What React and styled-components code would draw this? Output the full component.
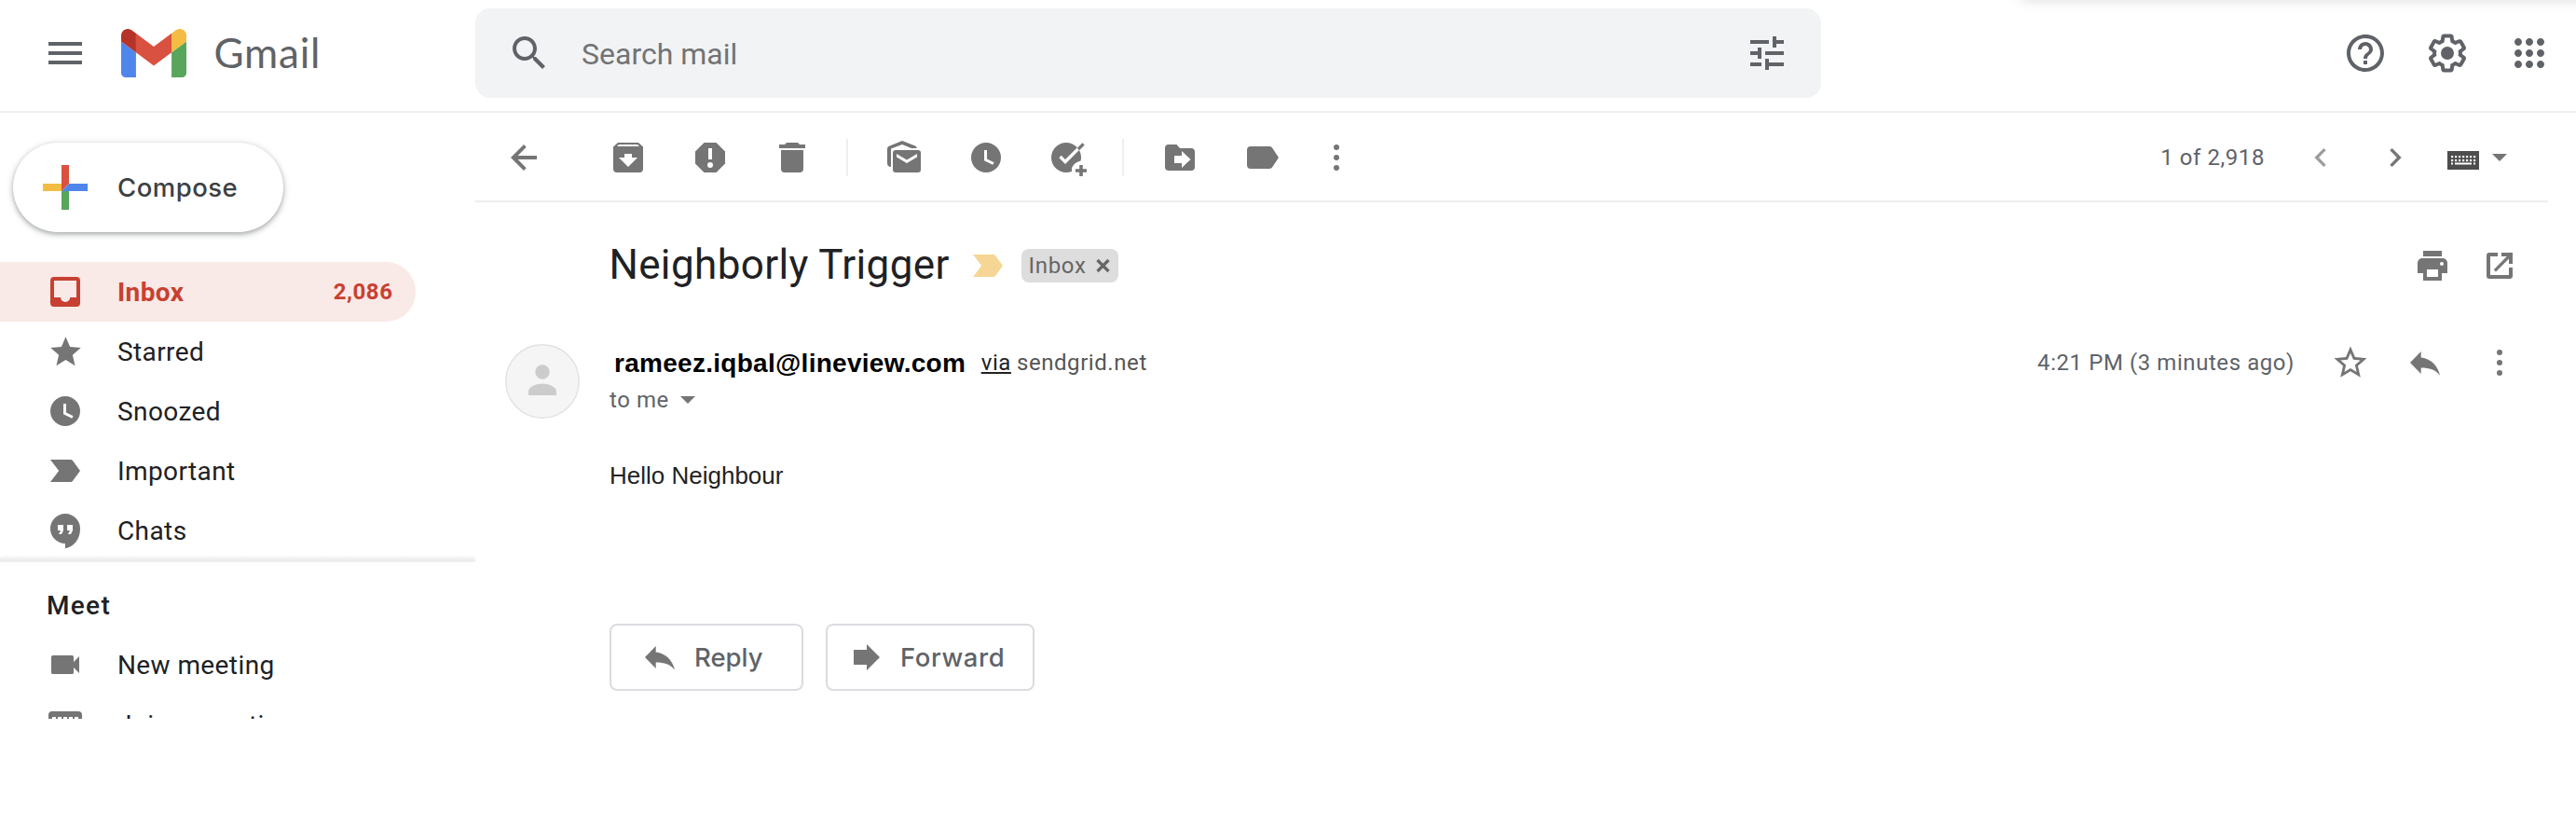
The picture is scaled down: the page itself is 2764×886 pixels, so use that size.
import React from "react";
import styled, { createGlobalStyle, css } from "styled-components";

const GlobalStyle = createGlobalStyle`
  * { box-sizing: border-box; }
  body { margin: 0; background: #fff; font-family: Roboto, "Liberation Sans", sans-serif; }
`;

const buttonFont = css`
  font-family: Inter, Roboto, sans-serif;
  font-size: 27.5px;
  font-weight: 500;
`;

/* ---------- page frame ---------- */

const Page = styled.div`
  width: 2764px;
  height: 886px;
  overflow: hidden;
  background: #fff;
  color: #202124;
`;

const Header = styled.header`
  position: relative;
  overflow: hidden;
  display: flex;
  align-items: center;
  height: 121px;
  padding: 0 26px 5px 0;
  border-bottom: 2px solid #eee;
`;

const FloatingShade = styled.div`
  position: absolute;
  top: -14px;
  right: -20px;
  width: 616px;
  height: 12px;
  border-radius: 8px;
  box-shadow: 0 0 16px rgba(0, 0, 0, 0.2);
`;

const Brand = styled.div`
  display: flex;
  align-items: center;
  width: 510px;
  padding-left: 46px;
`;

const Logo = styled.svg`
  width: 70px;
  height: 52px;
  margin-left: 36px;
`;

const Wordmark = styled.span`
  font-family: Lato, Roboto, sans-serif;
  margin-left: 29.5px;
  padding-bottom: 2px;
  font-size: 44px;
  line-height: 52px;
  letter-spacing: 0.8px;
  color: #5f6368;
`;

const SearchBar = styled.div`
  display: flex;
  align-items: center;
  width: 1444px;
  height: 96px;
  padding: 0 34px;
  border-radius: 16px;
  background: #f1f3f4;
`;

const SearchText = styled.span`
  flex: 1;
  margin-left: 32px;
  padding-top: 2px;
  font-size: 32px;
  color: #727375;
`;

const HeaderActions = styled.div`
  display: flex;
  gap: 40px;
  margin-left: auto;
`;

const Columns = styled.div`
  display: flex;
`;

/* ---------- sidebar ---------- */

const Sidebar = styled.aside`
  width: 510px;
  height: 650px;
  overflow: hidden;
`;

const ComposeButton = styled.div`
  ${buttonFont}
  display: flex;
  align-items: center;
  gap: 32px;
  width: 290px;
  height: 96px;
  margin: 32px 0 32px 14px;
  padding-left: 32px;
  border-radius: 48px;
  background: #fff;
  color: #3c4043;
  letter-spacing: 0.5px;
  box-shadow: 0 2px 4px rgba(60, 64, 67, 0.32), 0 2px 6px 2px rgba(60, 64, 67, 0.15);
`;

const NavList = styled.nav`
  position: relative;
  height: 322px;
  border-bottom: 3px solid #eee;
  &::after {
    content: "";
    position: absolute;
    left: 0;
    right: 0;
    bottom: 0;
    height: 4px;
    border-radius: 4px 4px 0 0;
    background: linear-gradient(rgba(238, 238, 238, 0.2), #eee);
  }
`;

const NavItem = styled.div`
  display: flex;
  align-items: center;
  width: 446px;
  height: 64px;
  padding-right: 24.5px;
  border-radius: 0 32px 32px 0;
  background: ${(p) => (p.$active ? "#f9e9e7" : "transparent")};
  color: ${(p) => (p.$active ? "#c84031" : "#202124")};
  font-size: 28px;
  font-weight: ${(p) => (p.$active ? 700 : 400)};
  letter-spacing: 0.4px;
`;

const NavIcon = styled.span`
  display: flex;
  justify-content: center;
  width: 48px;
  margin: 0 32px 0 46px;
  color: ${(p) => (p.$active ? "#c84031" : "#757575")};
`;

const NavCount = styled.span`
  margin-left: auto;
  font-size: 24px;
  letter-spacing: 0.57px;
`;

const SectionTitle = styled.div`
  height: 78px;
  padding: 15px 0 0 50px;
  font-size: 28px;
  line-height: 63px;
  font-weight: 500;
  letter-spacing: 1.3px;
`;

/* ---------- message pane ---------- */

const Main = styled.main`
  width: 2224px;
`;

const Toolbar = styled.div`
  display: flex;
  align-items: center;
  height: 96px;
  padding: 2px 44px 0 8px;
  border-bottom: 2px solid #eee;
  color: #757575;
`;

const Slot = styled.span`
  display: flex;
  align-items: center;
  justify-content: center;
  width: ${(p) => p.$w || 88}px;
  margin-right: ${(p) => p.$after || 0}px;
  color: ${(p) => (p.$muted ? "#9d9d9d" : "#757575")};
`;

const Divider = styled.span`
  width: 2px;
  height: 40px;
  margin: 0 16px 0 14px;
  background: #eee;
`;

const Meta = styled.span`
  margin-left: ${(p) => (p.$push ? "auto" : 0)};
  margin-right: ${(p) => p.$after || 0}px;
  color: ${(p) => p.$tone || "#5f6368"};
  font-size: 24px;
  letter-spacing: 0.57px;
  white-space: nowrap;
`;

const Keyboard = styled.svg`
  width: 34px;
  height: 20px;
  margin: 6px 14px 0 16px;
  color: #4d4d4d;
`;

const Caret = styled.svg`
  width: 16px;
  height: 8px;
  margin-left: ${(p) => p.$before || 0}px;
  color: #757575;
`;

const SubjectRow = styled.div`
  display: flex;
  align-items: center;
  height: 104px;
  margin-top: 16px;
  padding: 0 16px 0 143.4px;
`;

const Subject = styled.h1`
  width: 367px;
  margin: 0 23.6px 2px 0;
  font-size: 44px;
  line-height: 52px;
  font-weight: 400;
  letter-spacing: 0.38px;
  white-space: nowrap;
  color: #202124;
`;

const Chip = styled.span`
  display: flex;
  align-items: center;
  justify-content: space-between;
  width: 104px;
  height: 36px;
  margin-left: 20px;
  padding: 0 9px 0 7.5px;
  border-radius: 8px;
  background: #ddd;
  color: #666;
  font-size: 24px;
  letter-spacing: 0.7px;
`;

const RowActions = styled.div`
  display: flex;
  align-items: center;
  margin-left: auto;
`;

const SenderRow = styled.div`
  display: flex;
  height: 80px;
  margin-top: 32px;
  padding: 0 12px 0 32px;
`;

const Avatar = styled.svg`
  width: 80px;
  height: 80px;
  margin-right: 32px;
`;

const SenderLines = styled.div`
  display: grid;
  grid-template-rows: 40px 40px;
  flex: 1;
`;

const Line = styled.div`
  display: flex;
  align-items: center;
`;

const SenderName = styled.span`
  margin: 0 16.5px 0 5px;
  padding-top: 2px;
  font-family: "Liberation Sans", Arial, sans-serif;
  font-size: 28px;
  font-weight: 700;
  letter-spacing: 0.28px;
  color: #000;
`;

const Via = styled(Meta)`
  color: #222;
  text-decoration: underline;
  text-decoration-thickness: 2px;
  text-underline-offset: 2px;
`;

const Body = styled.div`
  margin-top: 41px;
  padding-left: 144px;
  height: 179px;
  font-family: "Liberation Sans", Arial, sans-serif;
  font-size: 26px;
  line-height: 40px;
  color: #222;
`;

const Replies = styled.div`
  display: flex;
  gap: 24px;
  padding-left: 144px;
`;

const OutlineButton = styled.div`
  ${buttonFont}
  display: flex;
  align-items: center;
  width: ${(p) => p.$w}px;
  height: 72px;
  padding-left: ${(p) => p.$pad}px;
  gap: ${(p) => p.$gap}px;
  border: 2px solid #dadce0;
  border-radius: 8px;
  letter-spacing: ${(p) => p.$track || 0}px;
  color: #5f6368;
  svg { color: #757575; }
`;

/* ---------- icons ---------- */

const Icon = ({ w, h = w, box = `0 0 ${w} ${h}`, children }) => (
  <svg width={w} height={h} viewBox={box} fill="currentColor" fillRule="evenodd" overflow="visible">
    {children}
  </svg>
);

const Glyph = ({ d, size = 48, color }) => (
  <svg width={size} height={size} viewBox="0 0 24 24" fill={color || "currentColor"}>
    <path d={d} />
  </svg>
);

const GRAY = "#5f6368";
const paths = {
  menu: "M3 18h18v-2H3v2zm0-5h18v-2H3v2zm0-7v2h18V6H3z",
  search:
    "M15.5 14h-.79l-.28-.27C15.41 12.59 16 11.11 16 9.5 16 5.91 13.09 3 9.5 3S3 5.91 3 9.5 5.91 16 9.5 16c1.61 0 3.09-.59 4.23-1.57l.27.28v.79l5 4.99L20.49 19l-4.99-5zm-6 0C7.01 14 5 11.99 5 9.5S7.01 5 9.5 5 14 7.01 14 9.5 11.99 14 9.5 14z",
  tune: "M3 17v2h6v-2H3zM3 5v2h10V5H3zm10 16v-2h8v-2h-8v-2h-2v6h2zM7 9v2H3v2h4v2h2V9H7zm14 4v-2H11v2h10zm-6-4h2V7h4V5h-4V3h-2v6z",
  help: "M11 18h2v-2h-2v2zm1-16C6.48 2 2 6.48 2 12s4.48 10 10 10 10-4.48 10-10S17.52 2 12 2zm0 18c-4.41 0-8-3.59-8-8s3.59-8 8-8 8 3.59 8 8-3.59 8-8 8zm0-14c-2.21 0-4 1.79-4 4h2c0-1.1.9-2 2-2s2 .9 2 2c0 2-3 1.75-3 5h2c0-2.25 3-2.5 3-5 0-2.21-1.79-4-4-4z",
  gear: "M13.85 22.25h-3.7c-.74 0-1.36-.54-1.45-1.27l-.27-1.89c-.27-.14-.53-.29-.79-.46l-1.8.72c-.7.26-1.47-.03-1.81-.65L2.2 15.53c-.35-.66-.2-1.44.36-1.88l1.53-1.19c-.01-.15-.02-.3-.02-.46 0-.15.01-.31.02-.46l-1.52-1.19c-.59-.45-.74-1.26-.37-1.88l1.85-3.19c.34-.62 1.11-.9 1.79-.63l1.81.73c.26-.17.52-.32.78-.46l.27-1.91c.09-.7.71-1.25 1.44-1.25h3.7c.74 0 1.36.54 1.45 1.27l.27 1.89c.27.14.53.29.79.46l1.8-.72c.71-.26 1.48.03 1.82.65l1.84 3.18c.36.66.2 1.44-.36 1.88l-1.52 1.19c.01.15.02.3.02.46s-.01.31-.02.46l1.52 1.19c.56.45.72 1.23.37 1.86l-1.86 3.22c-.34.62-1.11.9-1.8.63l-1.8-.72c-.26.17-.52.32-.78.46l-.27 1.91c-.1.68-.72 1.22-1.46 1.22zm-3.23-2h2.76l.37-2.55.53-.22c.44-.18.88-.44 1.34-.78l.45-.34 2.38.96 1.38-2.4-2.03-1.58.07-.56c.03-.26.06-.51.06-.78s-.03-.53-.06-.78l-.07-.56 2.03-1.58-1.39-2.4-2.39.96-.45-.35c-.42-.32-.87-.58-1.33-.77l-.52-.22-.37-2.55h-2.76l-.37 2.55-.53.21c-.44.19-.88.44-1.34.79l-.45.33-2.38-.95-1.39 2.39 2.03 1.58-.07.56a7 7 0 0 0-.06.79c0 .26.02.53.06.78l.07.56-2.03 1.58 1.38 2.4 2.39-.96.45.35c.43.33.86.58 1.33.77l.53.22.38 2.55zM15.5 12a3.5 3.5 0 1 1-7 0 3.5 3.5 0 0 1 7 0z",
  apps: "M6 8c1.1 0 2-.9 2-2s-.9-2-2-2-2 .9-2 2 .9 2 2 2zm6 12c1.1 0 2-.9 2-2s-.9-2-2-2-2 .9-2 2 .9 2 2 2zm-6 0c1.1 0 2-.9 2-2s-.9-2-2-2-2 .9-2 2 .9 2 2 2zm0-6c1.1 0 2-.9 2-2s-.9-2-2-2-2 .9-2 2 .9 2 2 2zm6 0c1.1 0 2-.9 2-2s-.9-2-2-2-2 .9-2 2 .9 2 2 2zm4-8c0 1.1.9 2 2 2s2-.9 2-2-.9-2-2-2-2 .9-2 2zm-4 2c1.1 0 2-.9 2-2s-.9-2-2-2-2 .9-2 2 .9 2 2 2zm6 6c1.1 0 2-.9 2-2s-.9-2-2-2-2 .9-2 2 .9 2 2 2zm0 6c1.1 0 2-.9 2-2s-.9-2-2-2-2 .9-2 2 .9 2 2 2z",
  star: "M12 17.27 18.18 21l-1.64-7.03L22 9.24l-7.19-.61L12 2 9.19 8.63 2 9.24l5.46 4.73L5.82 21z",
  starOutline:
    "M22 9.24l-7.19-.62L12 2 9.19 8.63 2 9.24l5.46 4.73L5.82 21 12 17.27 18.18 21l-1.63-7.03L22 9.24zM12 15.4l-3.76 2.27 1-4.28-3.32-2.88 4.38-.38L12 6.1l1.71 4.04 4.38.38-3.32 2.88 1 4.28L12 15.4z",
  left: "M15.41 7.41 14 6l-6 6 6 6 1.41-1.41L10.83 12z",
  right: "M10 6 8.59 7.41 13.17 12l-4.58 4.59L10 18l6-6z",
};

const GmailLogo = () => (
  <Logo viewBox="52 42 88 66" preserveAspectRatio="none">
    <path fill="#4f86ec" d="M58 108h14V74L52 59v43c0 3.32 2.69 6 6 6" />
    <path fill="#58a55c" d="M120 108h14c3.32 0 6-2.69 6-6V59l-20 15" />
    <path fill="#f2bd42" d="M120 48v26l20-15v-8c0-7.42-8.47-11.65-14.4-7.2" />
    <path fill="#d95140" d="M72 74V48l24 18 24-18v26L96 92" />
    <path fill="#b63329" d="M52 51v8l20 15V48l-5.6-4.2c-5.94-4.45-14.4-.22-14.4 7.2" />
  </Logo>
);

const ComposePlus = () => (
  <Icon w={48}>
    <path fill="#f2bd42" d="M0 20h20v8H0z" />
    <path fill="#58a55c" d="M20 28h8v20h-8z" />
    <path fill="#4f86ec" d="M28 20h20v8H20z" />
    <path fill="#d95140" d="M20 0h8v20l-8 8z" />
  </Icon>
);

const InboxIcon = () => (
  <Icon w={32}>
    <path d="M4 0h24a4 4 0 0 1 4 4v24a4 4 0 0 1-4 4H4a4 4 0 0 1-4-4V4a4 4 0 0 1 4-4zM4 4v18h7a5.1 5.1 0 0 0 10.2 0H28V4z" />
  </Icon>
);

const ClockIcon = () => (
  <Icon w={32}>
    <path d="M16 0a16 16 0 1 1 0 32 16 16 0 0 1 0-32zM14 8v11.3l9.2 4.5 1.4-2.5L17 17.6V8z" />
  </Icon>
);

const ImportantIcon = ({ color = "currentColor" }) => (
  <Icon w={32} h={24}>
    <path fill={color} d="M0 0h21.5c1 0 2 .5 2.6 1.3L32 12l-7.9 10.7c-.6.8-1.6 1.3-2.6 1.3H0l9.2-12z" />
  </Icon>
);

const ChatsIcon = () => (
  <Icon w={32} h={37}>
    <path d="M16 0a16 16 0 1 0 0 32v5.3C25.5 35.5 32 27.5 32 16A16 16 0 0 0 16 0zM8 12h6v6l-2 4H9l2-4H8zM18 12h6v6l-2 4h-3l2-4h-3z" />
  </Icon>
);

const CameraIcon = () => (
  <Icon w={30} h={20}>
    <path d="M1.5 0h21A1.5 1.5 0 0 1 24 1.5V7l6-6v18l-6-6v5.5a1.5 1.5 0 0 1-1.5 1.5h-21A1.5 1.5 0 0 1 0 18.5v-17A1.5 1.5 0 0 1 1.5 0z" />
  </Icon>
);

const KeypadIcon = () => (
  <Icon w={36} h={28}>
    <path d="M4 0h28a4 4 0 0 1 4 4v20a4 4 0 0 1-4 4H4a4 4 0 0 1-4-4V4a4 4 0 0 1 4-4zM4 6v4h4V6zM10 6v4h4V6zM16 6v4h4V6zM22 6v4h4V6zM28 6v4h4V6zM4 12v4h4v-4zM10 12v4h4v-4zM16 12v4h4v-4zM22 12v4h4v-4zM28 12v4h4v-4zM10 20v4h16v-4z" />
  </Icon>
);

const BackIcon = () => (
  <Icon w={28}>
    <path d="M28 12H7.7l9-9.2L14 0 0 14l14 14 2.7-2.8L7.7 16H28z" />
  </Icon>
);

const ArchiveIcon = () => (
  <Icon w={32}>
    <path d="M5 0h22l5 4.5V28a4 4 0 0 1-4 4H4a4 4 0 0 1-4-4V4.5zM6 2 4 4h24l-2-2zM12 12v4H6l10 10 10-10h-6v-4z" />
  </Icon>
);

const SpamIcon = () => (
  <Icon w={32}>
    <path d="M9.5 0h13L32 9.5v13L22.5 32h-13L0 22.5v-13zM14 6v12h4V6zM16 21a3 3 0 1 0 0 6 3 3 0 0 0 0-6z" />
  </Icon>
);

const TrashIcon = () => (
  <Icon w={28} h={32}>
    <path d="M0 2h6l2-2h12l2 2h6v4H0zM2 8h24v20a4 4 0 0 1-4 4H6a4 4 0 0 1-4-4z" />
  </Icon>
);

const UnreadIcon = () => (
  <Icon w={36}>
    <path d="M4 28C1.5 28 0 26.5 0 24V9c0-1.5.6-2.5 2-3.2L16 0l14 5.5c1 .5 1.6 1.2 1.8 2.5H26L16 4 4 8.500z" />
    <path d="M9 10h24a3 3 0 0 1 3 3v18a3 3 0 0 1-3 3H9a3 3 0 0 1-3-3V13a3 3 0 0 1 3-3zM10 14v3.500L21 24l11-6.500V14l-11 6.500z" />
  </Icon>
);

const TaskIcon = () => (
  <Icon w={36} h={32}>
    <circle cx="16" cy="16" r="16" />
    <path fill="#fff" d="M36 19.5h-4c-5.500 1-9 4.500-10 8V38h14z" />
    <path fill="none" stroke="#fff" strokeWidth="3.4" d="m9.500 15 5.500 5.500L30 5.500" />
    <path fill="none" stroke="currentColor" strokeWidth="3.2" d="M29 7l5.600-5.600" />
    <path d="M30.200 24h3.600v4.200H38v3.600h-4.200V36h-3.600v-4.200H26v-3.600h4.200z" />
  </Icon>
);

const MoveIcon = () => (
  <Icon w={32} h={28}>
    <path d="M4 0h8.500L16 4h12a4 4 0 0 1 4 4v16a4 4 0 0 1-4 4H4a4 4 0 0 1-4-4V4a4 4 0 0 1 4-4zM10 12v8h8v5l9.500-9L18 7v5z" />
  </Icon>
);

const LabelIcon = () => (
  <Icon w={36} h={24} box="-2 0 36 24">
    <path d="M4 0h20c1.300 0 2.500.600 3.200 1.700L34 12l-6.800 10.300c-.7 1.100-1.900 1.700-3.200 1.700H4a4 4 0 0 1-4-4V4a4 4 0 0 1 4-4z" />
  </Icon>
);

const DotsIcon = () => (
  <Icon w={6} h={28}>
    <circle cx="3" cy="3" r="3" />
    <circle cx="3" cy="14" r="3" />
    <circle cx="3" cy="25" r="3" />
  </Icon>
);

const TriangleIcon = ({ $before }) => (
  <Caret $before={$before} viewBox="0 0 16 8" fill="currentColor">
    <path d="M0 0h16L8 8z" />
  </Caret>
);

const KeyboardIcon = () => (
  <Keyboard viewBox="0 0 34 20" fill="currentColor">
    <path d="M0 0h34v20H0z" />
    {[5, 9].map((y) =>
      [4, 8, 12, 16, 20, 24, 28].map((x) => <rect key={`${x}-${y}`} x={x} y={y} width="2.2" height="2.2" fill="#fff" />)
    )}
    <path fill="#fff" d="M4 12.500h2v2H4zM8 12.500h18v2H8zM28 12.500h2v2h-2z" />
  </Keyboard>
);

const PrintIcon = () => (
  <Icon w={32}>
    <path d="M6 0h20v6H6zM5 8h22a5 5 0 0 1 5 5v11h-6v8H6v-8H0V13a5 5 0 0 1 5-5zM10 20v8h12v-8zM26 12a2 2 0 1 0 0 4 2 2 0 0 0 0-4z" />
  </Icon>
);

const PopOutIcon = () => (
  <Icon w={28}>
    <path d="M12 0v4H4v20h20v-8h4v9a3 3 0 0 1-3 3H3a3 3 0 0 1-3-3V3a3 3 0 0 1 3-3zM16 0h12v12h-4V6.500L10 20.500 7.800 18.200 21.800 4H16z" />
  </Icon>
);

const ReplyIcon = () => (
  <Icon w={32} h={24}>
    <path d="M11.700 0v6.500C23 8 29.500 15.500 32 25.500 27 19.500 21 17.500 11.700 17.500V24L0 12z" />
  </Icon>
);

const ForwardIcon = () => (
  <Icon w={28}>
    <path d="M0 6h14V0l14 14-14 14v-6H0z" />
  </Icon>
);

const CloseIcon = () => (
  <Icon w={15} h={14}>
    <path fill="none" stroke="currentColor" strokeWidth="3.2" d="M1.500 1l12 12M13.500 1l-12 12" />
  </Icon>
);

const Person = () => (
  <Avatar viewBox="0 0 80 80">
    <circle cx="40" cy="40" r="39.3" fill="#f5f5f5" stroke="#e2e2e2" strokeWidth="1.4" />
    <circle cx="40" cy="30" r="7.7" fill="#ccc" />
    <path fill="#ccc" d="M25 55v-4c0-5.500 9-8.500 15-8.500s15 3 15 8.500v4z" />
  </Avatar>
);

/* ---------- page ---------- */

const folders = [
  { label: "Inbox", icon: <InboxIcon />, count: "2,086", active: true },
  { label: "Starred", icon: <Glyph d={paths.star} size={39} /> },
  { label: "Snoozed", icon: <ClockIcon /> },
  { label: "Important", icon: <ImportantIcon /> },
  { label: "Chats", icon: <ChatsIcon /> },
];

const meetings = [
  { label: "New meeting", icon: <CameraIcon /> },
  { label: "Join a meeting", icon: <KeypadIcon /> },
];

const NavRow = ({ item }) => (
  <NavItem $active={item.active}>
    <NavIcon $active={item.active}>{item.icon}</NavIcon>
    {item.label}
    {item.count && <NavCount>{item.count}</NavCount>}
  </NavItem>
);

export default function App() {
  return (
    <Page>
      <GlobalStyle />
      <Header>
        <FloatingShade />
        <Brand>
          <Glyph d={paths.menu} color={GRAY} />
          <GmailLogo />
          <Wordmark>Gmail</Wordmark>
        </Brand>
        <SearchBar>
          <Glyph d={paths.search} color={GRAY} />
          <SearchText>Search mail</SearchText>
          <Glyph d={paths.tune} color={GRAY} />
        </SearchBar>
        <HeaderActions>
          <Glyph d={paths.help} color={GRAY} />
          <Glyph d={paths.gear} color={GRAY} />
          <Glyph d={paths.apps} color={GRAY} />
        </HeaderActions>
      </Header>
      <Columns>
        <Sidebar>
          <ComposeButton>
            <ComposePlus />
            Compose
          </ComposeButton>
          <NavList>
            {folders.map((f) => <NavRow key={f.label} item={f} />)}
          </NavList>
          <SectionTitle>Meet</SectionTitle>
          {meetings.map((m) => <NavRow key={m.label} item={m} />)}
        </Sidebar>
        <Main>
          <Toolbar>
            <Slot $after={24}><BackIcon /></Slot>
            <Slot><ArchiveIcon /></Slot>
            <Slot><SpamIcon /></Slot>
            <Slot><TrashIcon /></Slot>
            <Divider />
            <Slot><UnreadIcon /></Slot>
            <Slot><ClockIcon /></Slot>
            <Slot><TaskIcon /></Slot>
            <Divider />
            <Slot><MoveIcon /></Slot>
            <Slot><LabelIcon /></Slot>
            <Slot $w={72}><DotsIcon /></Slot>
            <Meta $push $after={20}>1 of 2,918</Meta>
            <Slot $w={80} $muted><Glyph d={paths.left} size={40} /></Slot>
            <Slot $w={80}><Glyph d={paths.right} size={40} /></Slot>
            <KeyboardIcon />
            <TriangleIcon />
          </Toolbar>
          <SubjectRow>
            <Subject>Neighborly Trigger</Subject>
            <ImportantIcon color="#f5d694" />
            <Chip>
              Inbox
              <CloseIcon />
            </Chip>
            <RowActions>
              <Slot $w={72}><PrintIcon /></Slot>
              <Slot $w={72}><PopOutIcon /></Slot>
            </RowActions>
          </SubjectRow>
          <SenderRow>
            <Person />
            <SenderLines>
              <Line>
                <SenderName>rameez.iqbal@lineview.com</SenderName>
                <Via $after={6}>via</Via>
                <Meta $tone="#555">sendgrid.net</Meta>
                <RowActions>
                  <Meta $after={20}>4:21 PM (3 minutes ago)</Meta>
                  <Slot $w={80}><Glyph d={paths.starOutline} size={42} /></Slot>
                  <Slot $w={80}><ReplyIcon /></Slot>
                  <Slot $w={80}><DotsIcon /></Slot>
                </RowActions>
              </Line>
              <Line>
                <Meta>to me</Meta>
                <TriangleIcon $before={12} />
              </Line>
            </SenderLines>
          </SenderRow>
          <Body>Hello Neighbour</Body>
          <Replies>
            <OutlineButton $w={208} $pad={36} $gap={21}><ReplyIcon />Reply</OutlineButton>
            <OutlineButton $w={224} $pad={28} $gap={22} $track={0.6}><ForwardIcon />Forward</OutlineButton>
          </Replies>
        </Main>
      </Columns>
    </Page>
  );
}
